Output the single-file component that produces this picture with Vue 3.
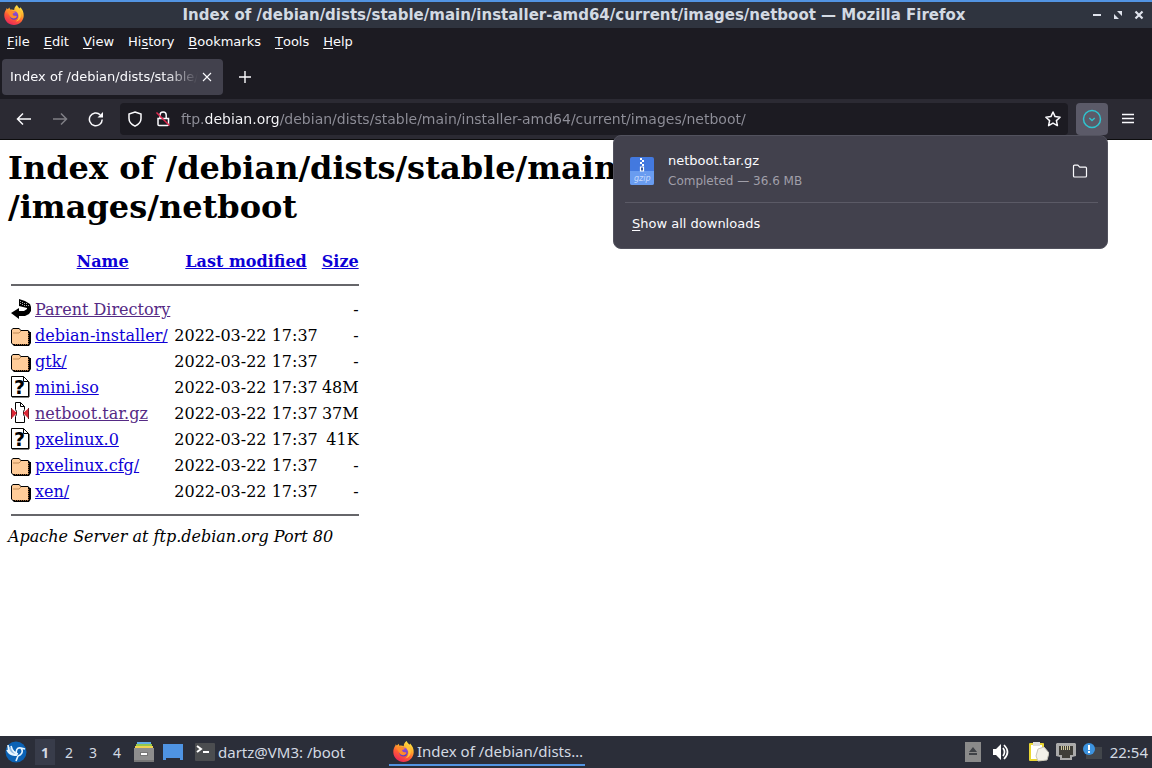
<script setup>
import { ref } from 'vue'

const menus = [
  { key: 'F', before: '', after: 'ile' },
  { key: 'E', before: '', after: 'dit' },
  { key: 'V', before: '', after: 'iew' },
  { key: 's', before: 'Hi', after: 'tory' },
  { key: 'B', before: '', after: 'ookmarks' },
  { key: 'T', before: '', after: 'ools' },
  { key: 'H', before: '', after: 'elp' }
]

const url = ref('ftp.debian.org/debian/dists/stable/main/installer-amd64/current/images/netboot/')

const files = [
  { icon: 'back', name: 'Parent Directory', date: '', size: '-', visited: true },
  { icon: 'folder', name: 'debian-installer/', date: '2022-03-22 17:37', size: '-' },
  { icon: 'folder', name: 'gtk/', date: '2022-03-22 17:37', size: '-' },
  { icon: 'unknown', name: 'mini.iso', date: '2022-03-22 17:37', size: '48M' },
  { icon: 'compressed', name: 'netboot.tar.gz', date: '2022-03-22 17:37', size: '37M', visited: true },
  { icon: 'unknown', name: 'pxelinux.0', date: '2022-03-22 17:37', size: '41K' },
  { icon: 'folder', name: 'pxelinux.cfg/', date: '2022-03-22 17:37', size: '-' },
  { icon: 'folder', name: 'xen/', date: '2022-03-22 17:37', size: '-' }
]

const desktop = ref(1)
const showDownloads = ref(true)
</script>

<template>
  <svg class="sprite" aria-hidden="true">
    <defs>
      <linearGradient id="flame" x1="0.8" y1="0" x2="0.3" y2="1">
        <stop offset="0" stop-color="#fff04a" />
        <stop offset="0.35" stop-color="#ffae2b" />
        <stop offset="0.65" stop-color="#ff5a36" />
        <stop offset="1" stop-color="#e8245c" />
      </linearGradient>
      <linearGradient id="globe" x1="0" y1="0" x2="0" y2="1">
        <stop offset="0" stop-color="#9a50d8" />
        <stop offset="1" stop-color="#5a3fc0" />
      </linearGradient>
    </defs>
    <symbol id="firefox" viewBox="0 0 20 20">
      <path fill="url(#flame)" d="M13 0c.5 1.500 1.500 2.300 2.700 3.600l.6-1.300C18.500 4.500 20 7.500 19.700 11 19.300 16.200 15.200 20 10 20S.6 16 .3 11C.1 8.300 1 6 2.300 4.300L2.600 3l1.100 1.200L5.500 2.500l.5 2.100c1.500-.4 3-.2 4.200.4C10.200 3 11.200 1 13 0z" />
      <circle cx="10" cy="10.500" r="4.300" fill="url(#globe)" />
      <path fill="#ff8a2a" d="M3 6.500c2-1.600 4.500-1.500 6-.2l2.300.5c-.4 1-1.500 1.400-2.600 1.600-.2 1.600 1 2.600 2.700 2.400 1-.1 1.500.2 1.500.7-.8 1.800-3 2.500-5 1.500C5.500 12 4.700 8 3 6.500z" />
      <path fill="#ffc43a" d="M12 3c3 1.500 5.300 4.500 4.900 8-.3 2.900-2.400 5.100-5.200 5.600 2.500-1.600 3.500-4 2.900-6.600-.4-1.900-2.500-3.500-2.600-7z" />
    </symbol>
  </svg>

  <div class="screen">
    <header class="titlebar">
      <svg class="app-icon"><use href="#firefox" /></svg>
      <div class="window-title">Index of /debian/dists/stable/main/installer-amd64/current/images/netboot — Mozilla Firefox</div>
      <div class="window-buttons">
        <button aria-label="Minimize">
          <svg width="10" height="10" viewBox="0 0 10 10"><path d="M1 5h8" stroke="#dfe3ec" stroke-width="2" /></svg>
        </button>
        <button aria-label="Restore">
          <svg width="10" height="10" viewBox="0 0 10 10"><path d="M4 1h5v5zM1 4v5h5z" fill="#dfe3ec" /></svg>
        </button>
        <button aria-label="Close window">
          <svg width="10" height="10" viewBox="0 0 10 10"><path d="M1.500 1.500l7 7M8.500 1.500l-7 7" stroke="#dfe3ec" stroke-width="2.200" /></svg>
        </button>
      </div>
    </header>

    <nav class="menubar">
      <button v-for="m in menus" :key="m.key">{{ m.before }}<u>{{ m.key }}</u>{{ m.after }}</button>
    </nav>

    <div class="tabs">
      <div class="tab">
        <span class="tab-label">Index of /debian/dists/stable/main</span>
        <button class="tab-close" aria-label="Close tab">
          <svg width="10" height="10" viewBox="0 0 10 10"><path d="M1 1l8 8M9 1l-8 8" stroke="#fbfbfe" stroke-width="1.100" /></svg>
        </button>
      </div>
      <button class="new-tab" aria-label="New tab">
        <svg width="12" height="12" viewBox="0 0 12 12"><path d="M6 0v12M0 6h12" stroke="#fbfbfe" stroke-width="1.400" /></svg>
      </button>
    </div>

    <div class="toolbar">
      <div class="nav-buttons">
        <button aria-label="Back">
          <svg width="16" height="16" viewBox="0 0 16 16"><path d="M15 8H1.500M7 2.500L1.500 8 7 13.500" /></svg>
        </button>
        <button class="dim" aria-label="Forward">
          <svg width="16" height="16" viewBox="0 0 16 16"><path d="M1 8h13.500M9 2.500L14.500 8 9 13.500" /></svg>
        </button>
        <button aria-label="Reload">
          <svg width="16" height="16" viewBox="0 0 16 16"><path d="M14.200 8.500A6.400 6.400 0 1 1 12.200 3.700" /><path d="M15 1v5.500H9.500z" fill="#fbfbfe" stroke="none" /></svg>
        </button>
      </div>
      <div class="urlbar">
        <svg width="16" height="16" viewBox="0 0 16 16"><path d="M8 1l6 2v4.500c0 3.500-2.500 6-6 7.700-3.500-1.700-6-4.200-6-7.700V3z" /></svg>
        <svg width="16" height="16" viewBox="0 0 16 16">
          <path d="M5 7V4a3 3 0 0 1 6.200 0v3M3 7.500h10.500v6a1 1 0 0 1-1 1H4a1 1 0 0 1-1-1z" />
          <path d="M1.500 1.500l13 13" class="slash" />
        </svg>
        <input v-model="url" type="text" aria-label="Address" spellcheck="false">
        <button aria-label="Bookmark this page">
          <svg width="16" height="16" viewBox="0 0 16 16"><path d="M8 1l2.100 4.600 5 .6-3.700 3.400 1 5L8 12.100l-4.400 2.500 1-5L.9 6.200l5-.6z" stroke-linejoin="round" /></svg>
        </button>
      </div>
      <div class="nav-buttons">
        <button class="downloads-button" aria-label="Downloads" @click="showDownloads = !showDownloads">
          <svg width="20" height="20" viewBox="0 0 20 20"><circle cx="10" cy="10" r="8.500" /><path d="M7.300 9l2.700 2.500L12.700 9" /></svg>
        </button>
        <button aria-label="Menu">
          <svg width="16" height="16" viewBox="0 0 16 16"><path d="M2 3.500h12M2 7.500h12M2 11.500h12" /></svg>
        </button>
      </div>

      <div v-if="showDownloads" class="downloads">
        <div class="download">
          <svg width="24" height="28" viewBox="0 0 24 28">
            <rect width="24" height="28" rx="2" fill="#4379df" />
            <path d="M0 14h24v12a2 2 0 0 1-2 2H2a2 2 0 0 1-2-2z" fill="#699cf0" />
            <path d="M10 1h2v2h-2zM12 3h2v2h-2zM10 5h2v2h-2zM12 7h2v2h-2z" fill="#fff" />
            <path d="M10.500 10h3v4h-3z" fill="#284c94" stroke="#fff" />
            <text x="4" y="24" class="zip">gzip</text>
          </svg>
          <div class="download-text">
            <div class="download-name">netboot.tar.gz</div>
            <div class="download-status">Completed — 36.6 MB</div>
          </div>
          <button class="open-folder" aria-label="Show in folder">
            <svg width="16" height="16" viewBox="0 0 16 16"><path d="M1.500 13V3.200c0-.6.400-1 1-1h3.300l2 2h5.700c.6 0 1 .4 1 1V13c0 .6-.4 1-1 1h-11c-.6 0-1-.4-1-1z" /></svg>
          </button>
        </div>
        <button class="show-all"><u>S</u>how all downloads</button>
      </div>
    </div>

    <main class="page">
      <h1>Index of /debian/dists/stable/main/installer-amd64/current<br>/images/netboot</h1>
      <table>
        <thead>
          <tr>
            <th class="icon"></th>
            <th><a href="#">Name</a></th>
            <th><a href="#">Last modified</a></th>
            <th><a href="#">Size</a></th>
          </tr>
          <tr><th class="rule" colspan="4"><hr></th></tr>
        </thead>
        <tbody>
          <tr v-for="f in files" :key="f.name">
            <td class="icon">
              <svg v-if="f.icon === 'back'" width="20" height="22" viewBox="0 0 20 22">
                <path d="M8 8V1l6 2 5 3 1 3v4l-2 3-4 2H8v3L0 15l8-5v3h5l3-2v-1z" fill="#000" />
                <path d="M9 3h1v1H9zM11 4h1v1h-1zM9 5h1v1H9zM13 5h1v1h-1zM11 6h1v1h-1zM15 7h1v1h-1zM13 7h1v1h-1zM15 5h1v1h-1zM17 7h1v1h-1z" fill="#aaa" />
              </svg>
              <svg v-else-if="f.icon === 'folder'" width="20" height="22" viewBox="0 0 20 22">
                <path d="M2 4h6l2 2h7l2 2h1v11l-2 3H3l-3-3V6z" fill="#000" />
                <path d="M2 5h6l2 2h7v13H2l-1-1V6z" fill="#fc9" />
                <path d="M2 9h6l2-2" fill="none" stroke="#c08a55" />
                <path d="M17.500 9v11.500H4" fill="none" stroke="#996233" stroke-dasharray="1 1" />
              </svg>
              <svg v-else-if="f.icon === 'unknown'" width="20" height="22" viewBox="0 0 20 22">
                <path d="M.5.500h12l5 5v15H.5z" fill="#fff" stroke="#000" />
                <path d="M12.500.500v5h5M1 21h17V6" fill="none" stroke="#000" />
                <text x="3" y="18" class="question">?</text>
              </svg>
              <svg v-else width="20" height="22" viewBox="0 0 20 22">
                <path d="M4.500.500h5l4 4v3l-1 2v3l1 2v6h-9v-6l1-2v-3l-1-2z" fill="#fff" stroke="#000" />
                <path d="M9.500.500v4h4" fill="none" stroke="#000" />
                <path d="M0 6l6 5-6 6zM18 6l-6 5 6 6z" fill="#dc2836" />
                <path d="M.5 6v11M17.500 6v11" stroke="#701820" />
              </svg>
            </td>
            <td><a href="#" :class="{ visited: f.visited }">{{ f.name }}</a></td>
            <td class="right">{{ f.date }}</td>
            <td class="right">{{ f.size }}</td>
          </tr>
          <tr><td class="rule" colspan="4"><hr></td></tr>
        </tbody>
      </table>
      <address>Apache Server at ftp.debian.org Port 80</address>
    </main>

    <footer class="panel">
      <button class="launcher" aria-label="Applications">
        <svg width="22" height="22" viewBox="0 0 22 22">
          <circle cx="11" cy="11" r="10.500" fill="#0b62b5" />
          <path d="M3 4c0 6 3 10 9 10M6 5c1 4 3 7 7 8M2 9c2 4 5 6 10 5M12 14c-2-4 0-8 4-7l4 1M16 7c3 4 0 7-3 8l-2 5" fill="none" stroke="#e7f5ff" stroke-width="1.600" />
          <path d="M3 4c2 3 5 4 8 8l1 3C6 14 3 10 3 4z" fill="#e7f5ff" fill-opacity=".6" />
        </svg>
      </button>
      <div class="desktops">
        <button v-for="n in 4" :key="n" :class="{ active: desktop === n }" @click="desktop = n">{{ n }}</button>
      </div>
      <div class="quick">
        <button aria-label="File manager">
          <svg width="20" height="20" viewBox="0 0 20 20">
            <path d="M3 0h14v3H3z" fill="#62aee5" /><path d="M2 2h16v3H2z" fill="#94c84e" /><path d="M1 4h18v3H1z" fill="#f0d350" />
            <path d="M0 6h20v14H0z" fill="#8e8e8e" /><path d="M0 18h20v2H0z" fill="#777" />
            <path d="M6 10h8v4H6z" fill="#777" /><path d="M7 11h6v2H7z" fill="#fff" />
          </svg>
        </button>
        <button aria-label="Show desktop">
          <svg width="20" height="20" viewBox="0 0 20 20"><path d="M0 2h20v16h-3v-2H3v2H0z" fill="#4f94e3" /></svg>
        </button>
      </div>
      <div class="tasks">
        <button class="task">
          <svg width="20" height="20" viewBox="0 0 20 20">
            <rect y="1" width="20" height="18" rx="1" fill="#4b4d50" />
            <path d="M2 4l4 3-4 3" fill="none" stroke="#fff" stroke-width="2" /><path d="M8 10h6" stroke="#fff" stroke-width="2" />
          </svg>
          <span>dartz@VM3: /boot</span>
        </button>
        <button class="task current">
          <svg width="21" height="21"><use href="#firefox" /></svg>
          <span>Index of /debian/dists…</span>
        </button>
      </div>
      <div class="tray">
        <svg width="16" height="20" viewBox="0 0 16 20"><path d="M0 0h16v20H0z" fill="#8a8a8a" /><path d="M8 5l4 5H4zM4 11h8v2H4z" fill="#3f4247" /></svg>
        <svg class="volume" width="18" height="18" viewBox="0 0 18 18">
          <path d="M1 6h3l5-5v16l-5-5H1z" fill="#fff" /><path d="M11 5q3 4 0 8M12 2q7 7 0 14" fill="none" stroke="#fff" stroke-width="1.700" />
        </svg>
        <svg width="20" height="22" viewBox="0 0 20 22">
          <rect y="2" width="15" height="18" rx="1" fill="#e9d634" /><path d="M2 4h11v14H2z" fill="#fff" />
          <path d="M4 1h7v4H4z" fill="#ddd" /><path d="M9 8l6-2 5 6-2 7-9 1-2-5z" fill="#f3f1e9" stroke="#c9c6ba" />
        </svg>
        <svg width="20" height="18" viewBox="0 0 20 18">
          <path d="M1 0h18l1 1v12l-4 1v3H4v-3l-4-1V1z" fill="#aaa" /><path d="M3 3h14v9h-3v3H6v-3H3z" fill="#3f3e39" />
          <path d="M5.500 3v4M7.500 3v4M9.500 3v4M11.500 3v4M13.500 3v4" stroke="#d0c89e" />
        </svg>
        <svg width="20" height="20" viewBox="0 0 20 20">
          <path d="M3 5h16v12H3z" fill="#42464b" /><circle cx="6" cy="7" r="6" fill="#3c93df" /><path d="M6 3v5M6 9v2" stroke="#fff" stroke-width="2" />
        </svg>
        <time>22:54</time>
      </div>
    </footer>
  </div>
</template>

<style>
body {
  margin: 0;
}
</style>

<style scoped>
.sprite {
  position: absolute;
  width: 0;
  height: 0;
}

.screen {
  display: flex;
  flex-direction: column;
  min-height: 100vh;
  overflow: hidden;
  background: #fff;
  color: #fbfbfe;
  font-family: 'DejaVu Sans', sans-serif;
  font-size: 13px;
}

button {
  display: flex;
  align-items: center;
  justify-content: center;
  padding: 0;
  border: 0;
  background: none;
  color: inherit;
  font: inherit;
}

svg {
  display: block;
  flex: none;
}

.titlebar {
  box-sizing: border-box;
  height: 28px;
  padding: 0 8px 0 4px;
  display: grid;
  grid-template-columns: 1fr auto 1fr;
  align-items: center;
  border-top: 2px solid #5294e2;
  background: #2f343f;
}

.app-icon {
  width: 20px;
  height: 20px;
}

.window-title {
  color: #d3dae3;
  font-size: 15px;
  font-weight: bold;
  line-height: 20px;
  white-space: nowrap;
}

.window-buttons {
  display: flex;
  justify-content: flex-end;
  gap: 11px;
}

.menubar {
  height: 26px;
  display: flex;
  align-items: center;
  gap: 14px;
  padding: 0 7px;
  background: #1c1b22;
}

u {
  text-underline-offset: 2px;
}

.tabs {
  height: 45px;
  display: flex;
  align-items: center;
  gap: 8px;
  padding: 0 2px;
  background: #1c1b22;
}

.tab {
  box-sizing: border-box;
  width: 221px;
  height: 36px;
  display: flex;
  align-items: center;
  gap: 4px;
  padding: 0 11px 0 8px;
  border-radius: 4px;
  background: #42414d;
}

.tab-label {
  flex: 1;
  overflow: hidden;
  white-space: nowrap;
  mask-image: linear-gradient(to left, transparent, #000 32px);
}

.new-tab {
  width: 28px;
  height: 28px;
}

.toolbar {
  position: relative;
  display: flex;
  gap: 8px;
  padding: 4px 8px;
  border-bottom: 1px solid #0c0c0d;
  background: #2b2a33;
}

.toolbar svg {
  fill: none;
  stroke: #fbfbfe;
  stroke-width: 1.5;
}

.nav-buttons {
  display: flex;
  gap: 4px;
}

.nav-buttons button {
  width: 32px;
  height: 32px;
  border-radius: 4px;
}

.nav-buttons .dim {
  opacity: 0.4;
}

.nav-buttons .downloads-button {
  background: #5b5a68;
}

.toolbar .downloads-button svg {
  stroke: #2fc4cf;
}

.urlbar {
  flex: 1;
  height: 32px;
  box-sizing: border-box;
  display: flex;
  align-items: center;
  gap: 12px;
  padding: 0 7px;
  border-radius: 4px;
  background: #1c1b22;
  font-size: 14px;
}

.toolbar .slash {
  stroke: #e22850;
}

/* the registered domain is brighter than the rest of the address */
.urlbar input {
  flex: 1;
  min-width: 0;
  margin-left: -2px;
  padding: 0;
  border: 0;
  outline: 0;
  background: linear-gradient(to right, #8f8f99 24px, #fbfbfe 24px, #fbfbfe 99px, #8f8f99 99px);
  background-clip: text;
  -webkit-text-fill-color: transparent;
  color: #8f8f99;
  font: inherit;
}

.downloads {
  position: absolute;
  z-index: 1;
  top: 36px;
  right: 44px;
  width: 495px;
  height: 114px;
  box-sizing: border-box;
  padding: 0 9px 0 11px;
  border: 1px solid #52525e;
  border-radius: 8px;
  background: #42414d;
}

.download {
  box-sizing: border-box;
  height: 67px;
  display: flex;
  align-items: center;
  gap: 14px;
  padding: 3px 10px 0 5px;
  border-bottom: 1px solid #5b5a66;
}

.download svg {
  stroke-width: 1.2;
}

.download > svg {
  stroke: none;
}

.download-text {
  flex: 1;
  line-height: 20px;
}

.download-status {
  color: #a09fa9;
  font-size: 12px;
}

.zip {
  fill: #c5dafd;
  font: italic 8px 'DejaVu Sans', sans-serif;
}

.show-all {
  height: 40px;
  padding: 0 7px;
}

.page {
  flex: 1;
  padding: 9px 8px 8px;
  background: #fff;
  color: #000;
  font: 16px 'DejaVu Serif', serif;
}

h1 {
  margin: 0 0 20px;
  font-size: 32px;
  line-height: 39px;
  white-space: nowrap;
}

table {
  border-spacing: 2px;
}

th,
td {
  padding: 2px 1px 0;
  line-height: 22px;
  white-space: nowrap;
}

.icon,
.rule {
  padding: 1px;
}

.icon {
  width: 20px;
}

.right {
  text-align: right;
}

a {
  color: #0d00d6;
}

a.visited {
  color: #552a85;
}

hr {
  height: 2px;
  margin: 8px 0;
  border: 0;
  background: #66666a;
}

.question {
  font: bold 19px 'DejaVu Sans', sans-serif;
}

address {
  line-height: 19px;
}

.panel {
  height: 32px;
  display: flex;
  align-items: center;
  padding: 0 4px 0 5px;
  background: #2b2e39;
  color: #d3dae3;
  font: 15px 'Noto Sans', sans-serif;
}

.desktops {
  display: flex;
  gap: 4px;
  margin-left: 8px;
  font-size: 14px;
}

.desktops button {
  width: 20px;
  height: 26px;
}

.desktops .active {
  background: #383c4a;
  font-weight: bold;
}

.quick {
  display: flex;
  gap: 9px;
  margin: 0 12px 0 7px;
}

.tasks {
  flex: 1;
  display: flex;
  align-self: stretch;
}

.task {
  width: 194px;
  gap: 3px;
  justify-content: flex-start;
  white-space: nowrap;
}

.task.current {
  box-sizing: border-box;
  width: 196px;
  margin-bottom: 2px;
  padding: 2px 0 0 4px;
  border-bottom: 2px solid #5294e2;
}

.tray {
  display: flex;
  align-items: center;
  gap: 7px;
}

.volume {
  margin: 0 12px 0 4px;
}
</style>
